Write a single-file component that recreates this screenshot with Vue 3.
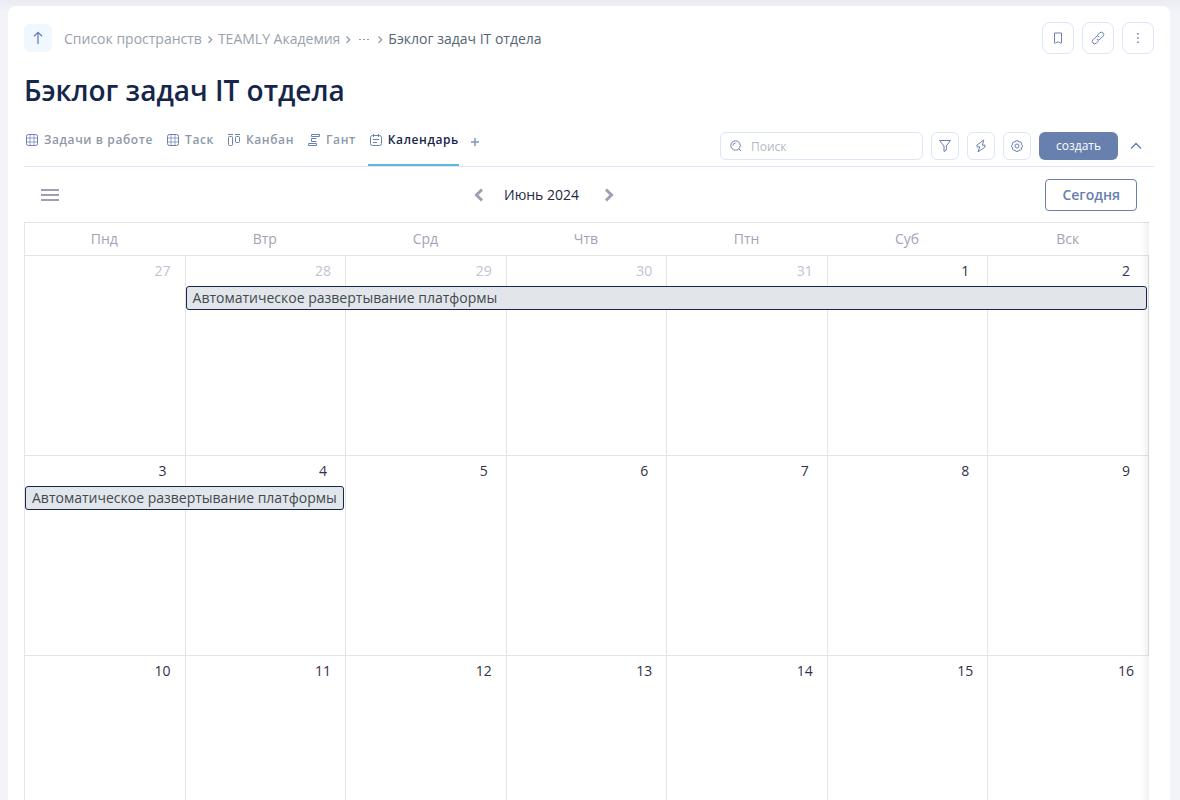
<script setup>
const weekdays = ['Пнд', 'Втр', 'Срд', 'Чтв', 'Птн', 'Суб', 'Вск']

const tabs = [
  { title: 'Задачи в работе', icon: 'grid' },
  { title: 'Таск', icon: 'grid' },
  { title: 'Канбан', icon: 'kanban' },
  { title: 'Гант', icon: 'gantt' },
  { title: 'Календарь', icon: 'calendar', active: true },
]

const taskName = 'Автоматическое развертывание платформы'

const weeks = [
  [
    { n: 27, muted: true },
    { n: 28, muted: true, event: { title: taskName, span: 6 } },
    { n: 29, muted: true },
    { n: 30, muted: true },
    { n: 31, muted: true },
    { n: 1 },
    { n: 2 },
  ],
  [{ n: 3, event: { title: taskName, span: 2 } }, { n: 4 }, { n: 5 }, { n: 6 }, { n: 7 }, { n: 8 }, { n: 9 }],
  [{ n: 10 }, { n: 11 }, { n: 12 }, { n: 13 }, { n: 14 }, { n: 15 }, { n: 16 }],
]
</script>

<template>
  <div class="shell">
    <main class="panel">
      <header class="topbar">
        <button class="up" type="button" aria-label="Наверх">
          <svg width="14" height="16" viewBox="0 0 14 16"><path d="M7 14V2.500M3 6.300 7 2.300l4 4" /></svg>
        </button>
        <nav class="crumbs" aria-label="Путь">
          <a href="#">Список пространств</a>
          <svg class="sep" width="16" height="12" viewBox="0 0 16 12"><path d="M6.500 3.500 9.700 6.700 6.500 9.900" /></svg>
          <a href="#">TEAMLY Академия</a>
          <svg class="sep" width="16" height="12" viewBox="0 0 16 12"><path d="M6.500 3.500 9.700 6.700 6.500 9.900" /></svg>
          <button class="more" type="button" aria-label="Показать путь">
            <svg width="16" height="12" viewBox="0 0 16 12"><path d="M3 6.500h2M7 6.500h2M11 6.500h2" /></svg>
          </button>
          <svg class="sep" width="16" height="12" viewBox="0 0 16 12"><path d="M6.500 3.500 9.700 6.700 6.500 9.900" /></svg>
          <a class="current" href="#">Бэклог задач IT отдела</a>
        </nav>
        <div class="actions">
          <button class="square large" type="button" aria-label="В закладки">
            <svg width="16" height="16" viewBox="0 0 16 16"><path d="M4.500 3h7v10h-1L8 11.800 5.500 13h-1z" /></svg>
          </button>
          <button class="square large" type="button" aria-label="Ссылка">
            <svg width="16" height="16" viewBox="0 0 16 16">
              <path d="M7 5.500 9.700 2.900a2.300 2.300 0 0 1 3.300 3.300l-3 3a2.300 2.300 0 0 1-3.300 0M9 10.500l-2.700 2.600A2.300 2.300 0 0 1 3 9.800l3-3a2.300 2.300 0 0 1 3.300 0" />
            </svg>
          </button>
          <button class="square large" type="button" aria-label="Меню">
            <svg width="16" height="16" viewBox="0 0 16 16"><path class="solid" d="M7.200 3h1.600v1.600H7.200zM7.200 7.200h1.600v1.600H7.200zM7.200 11.400h1.600V13H7.200z" /></svg>
          </button>
        </div>
      </header>

      <h1>Бэклог задач IT отдела</h1>

      <div class="views">
        <nav class="tabs" aria-label="Представления">
          <button v-for="tab in tabs" :key="tab.title" class="tab" :class="{ active: tab.active }" type="button">
            <svg width="12" height="12" viewBox="0 0 12 12">
              <template v-if="tab.icon === 'grid'">
                <rect x=".5" y=".5" width="11" height="11" rx="2" />
                <path class="soft" d="M4 1v10M8 1v10M1 4h10M1 8h10" />
              </template>
              <template v-else-if="tab.icon === 'kanban'">
                <path d="M0 .5h5M7 .5h5" />
                <rect x=".5" y="2.500" width="4" height="9" rx="1" />
                <rect x="7.500" y="2.500" width="4" height="6" rx="1" />
              </template>
              <template v-else-if="tab.icon === 'gantt'">
                <path d="M3.500.5h8v2h-8zM8.500 4.500h-5v3h5M.5 9.500h8v2h-8z" />
              </template>
              <template v-else>
                <rect x=".5" y="1.500" width="11" height="10" rx="2" />
                <path d="M3.500 0v3M8.500 0v3M3 5.500h6M3 8.500h4" />
              </template>
            </svg>
            {{ tab.title }}
          </button>
          <button class="add" type="button" aria-label="Добавить представление">
            <svg width="8" height="8" viewBox="0 0 8 8"><path d="M4 0v8M0 4h8" /></svg>
          </button>
        </nav>
        <div class="tools">
          <label class="search">
            <svg width="12" height="12" viewBox="0 0 12 12">
              <circle cx="5.500" cy="5.500" r="4.700" />
              <path d="M9 9l2 2M3 5.500A2.500 2.500 0 0 1 5.500 3" />
            </svg>
            <input type="search" placeholder="Поиск" aria-label="Поиск" />
          </label>
          <button class="square" type="button" aria-label="Фильтр">
            <svg width="14" height="14" viewBox="0 0 14 14"><path d="M1.500 1.500h11L8.300 7v4L6 12.500V7z" /></svg>
          </button>
          <button class="square" type="button" aria-label="Автоматизация">
            <svg width="14" height="14" viewBox="0 0 14 14"><path d="M9.800 1 3 6v2l2.800-.2L4 13l7-5V6l-2.700.2z" /></svg>
          </button>
          <button class="square" type="button" aria-label="Настройки">
            <svg width="14" height="14" viewBox="0 0 14 14">
              <path d="M5.800 1.800h2.400l.7 1.200 1.600-.1 1 1.200-.3 1.400 1.200.8v1.600l-1.200.8.3 1.500-1 1.100-1.600-.1-.7 1.200H5.800l-.7-1.200-1.600.1-1-1.100.3-1.500-1.200-.8V6.300l1.200-.8-.3-1.400 1-1.200 1.600.1z" />
              <circle cx="7" cy="7" r="2" />
            </svg>
          </button>
          <button class="create" type="button">создать</button>
          <button class="collapse" type="button" aria-label="Свернуть">
            <svg width="12" height="8" viewBox="0 0 12 8"><path d="M1 6.500l5-5 5 5" /></svg>
          </button>
        </div>
      </div>

      <section class="monthbar">
        <button class="burger" type="button" aria-label="Список задач">
          <svg width="18" height="12" viewBox="0 0 18 12"><path d="M0 1h18M0 6h18M0 11h18" /></svg>
        </button>
        <div class="month">
          <button type="button" aria-label="Предыдущий месяц">
            <svg width="10" height="14" viewBox="0 0 10 14"><path d="M8 1.500 2.500 7l5.500 5.500" /></svg>
          </button>
          <h2>Июнь 2024</h2>
          <button type="button" aria-label="Следующий месяц">
            <svg width="10" height="14" viewBox="0 0 10 14"><path d="M2 1.500 7.500 7 2 12.500" /></svg>
          </button>
        </div>
        <button class="today" type="button">Сегодня</button>
      </section>

      <div class="calendar">
        <table>
          <thead>
            <tr>
              <th v-for="day in weekdays" :key="day" scope="col">{{ day }}</th>
            </tr>
          </thead>
          <tbody>
            <tr v-for="(week, i) in weeks" :key="i">
              <td v-for="day in week" :key="day.n">
                <div class="date" :class="{ muted: day.muted }">{{ day.n }}</div>
                <a v-if="day.event" class="event" href="#" :style="{ '--span': day.event.span }">{{ day.event.title }}</a>
              </td>
            </tr>
          </tbody>
        </table>
      </div>
    </main>
  </div>
</template>

<style>
body {
  margin: 0;
  background: #f3f4f9;
}
</style>

<style scoped>
.shell {
  box-sizing: border-box;
  height: 100vh;
  padding: 6px 10px 0 8px;
  overflow: hidden;
  background: linear-gradient(#ebecf1, #f3f4f9 12px);
  font-family: "Open Sans", "Noto Sans", sans-serif;
  color: #15264a;
}
.panel {
  box-sizing: border-box;
  display: flex;
  flex-direction: column;
  height: 100%;
  padding: 16px 16px 0;
  background: #fff;
  border-radius: 8px 8px 0 0;
}
button {
  display: flex;
  align-items: center;
  justify-content: center;
  padding: 0;
  border: 0;
  background: none;
  font: inherit;
  color: inherit;
  cursor: pointer;
}
svg {
  flex: none;
  fill: none;
  stroke: #6b80b0;
}
.topbar {
  display: flex;
  align-items: center;
  height: 32px;
}
.up {
  width: 28px;
  height: 28px;
  margin-right: 12px;
  border-radius: 6px;
  background: #eff8ff;
}
.up svg {
  stroke-width: 1.3;
}
.crumbs {
  display: flex;
  align-items: center;
  font-size: 14px;
  line-height: 20px;
  padding-top: 2px;
}
.crumbs a {
  color: #99a1ad;
  text-decoration: none;
}
.crumbs a.current {
  color: #566575;
}
.sep {
  stroke: #8f99a8;
  stroke-width: 1.3;
}
.more svg {
  stroke: #8f99a8;
}
.actions {
  display: flex;
  gap: 8px;
  margin-left: auto;
}
.square {
  box-sizing: border-box;
  width: 28px;
  height: 28px;
  border: 1px solid #dde6f6;
  border-radius: 6px;
}
.square.large {
  width: 32px;
  height: 32px;
  border-radius: 8px;
}
.solid {
  fill: #6b80b0;
  stroke: none;
}
h1 {
  margin: 16px 0 0;
  font-size: 28px;
  line-height: 40px;
  font-weight: 600;
}
.views {
  display: flex;
  justify-content: space-between;
  height: 56px;
  border-bottom: 1px solid #dde6f6;
}
.tabs {
  display: flex;
  gap: 12px;
}
.tab {
  box-sizing: border-box;
  align-items: flex-start;
  gap: 6px;
  padding: 20px 0 0 2px;
  border-bottom: 2px solid transparent;
  font-size: 12px;
  line-height: 20px;
  font-weight: 600;
  letter-spacing: 0.05em;
  color: #8d98a7;
}
.tab svg {
  margin-top: 4px;
}
.tab.active {
  border-color: #64b5dc;
  color: #15264a;
}
.soft {
  opacity: 0.7;
}
.add {
  padding-top: 8px;
}
.add svg {
  stroke: #8294bd;
  stroke-width: 1.5;
}
.tools {
  display: flex;
  align-items: center;
  gap: 8px;
  padding-top: 16px;
}
.search {
  box-sizing: border-box;
  display: flex;
  align-items: center;
  gap: 9px;
  width: 203px;
  height: 28px;
  padding: 0 9px;
  border: 1px solid #dde6f6;
  border-radius: 6px;
}
.search input {
  flex: 1;
  min-width: 0;
  padding: 0;
  border: 0;
  outline: 0;
  background: none;
  font: 12px "Open Sans", sans-serif;
  color: #15264a;
}
.search input::placeholder {
  color: #b0bac4;
}
.create {
  box-sizing: border-box;
  width: 79px;
  height: 28px;
  padding-bottom: 2px;
  border-radius: 6px;
  background: #6880ae;
  font-size: 12px;
  color: #fff;
}
.collapse {
  width: 20px;
  height: 28px;
  margin-right: 8px;
}
.collapse svg {
  stroke-width: 1.5;
}
.monthbar {
  display: grid;
  grid-template-columns: 1fr auto 1fr;
  align-items: center;
  height: 55px;
  padding: 0 17px;
}
.burger {
  justify-self: start;
}
.burger svg {
  stroke: #9f9fb3;
  stroke-width: 2;
}
.month svg {
  stroke: #9f9fb3;
  stroke-width: 3;
}
.month {
  display: flex;
  align-items: center;
  gap: 20px;
  margin-right: 90px;
}
h2 {
  min-width: 80px;
  margin: 0;
  font-size: 14px;
  line-height: 20px;
  font-weight: 500;
  color: #22263f;
}
.today {
  justify-self: end;
  box-sizing: border-box;
  height: 32px;
  padding: 0 16px;
  border: 1px solid #6880ae;
  border-radius: 4px;
  font-size: 14px;
  font-weight: 600;
  color: #6880ae;
}
.calendar {
  position: relative;
  flex: 1;
  min-height: 0;
  margin-right: 5px;
  overflow: hidden;
}
.calendar::after {
  content: "";
  position: absolute;
  inset: 0 0 0 auto;
  width: 8px;
  background: linear-gradient(to right, transparent, rgba(0, 0, 0, 0.06));
  pointer-events: none;
}
table {
  width: 100%;
  table-layout: fixed;
  border-collapse: separate;
  border-spacing: 0;
  border-left: 1px solid #e3e4e6;
}
th {
  height: 32px;
  padding: 0 2px 0 0;
  border-top: 1px solid #e3e4e6;
  border-bottom: 1px solid #e3e4e6;
  font-size: 14px;
  line-height: 20px;
  font-weight: 400;
  color: #a3a3b4;
}
td {
  position: relative;
  height: 199px;
  padding: 0;
  border-right: 1px solid #e3e4e6;
  border-bottom: 1px solid #e3e4e6;
  vertical-align: top;
}
tbody tr:last-child td:last-child {
  border-right-color: transparent;
}
.date {
  width: 30px;
  margin: 5px 7px 0 auto;
  font-size: 14px;
  line-height: 20px;
  text-align: center;
  color: #333148;
}
.date.muted {
  color: #c1c3cf;
}
.event {
  box-sizing: border-box;
  position: absolute;
  z-index: 1;
  top: 30px;
  left: 0;
  width: calc(var(--span) * (100% + 1px) - 2px);
  height: 24px;
  padding: 0 6px;
  overflow: hidden;
  border: 1px solid #15284a;
  border-radius: 3px;
  background: #e2e6ea;
  font-size: 14px;
  line-height: 22px;
  white-space: nowrap;
  text-decoration: none;
  color: #414a50;
}
</style>
